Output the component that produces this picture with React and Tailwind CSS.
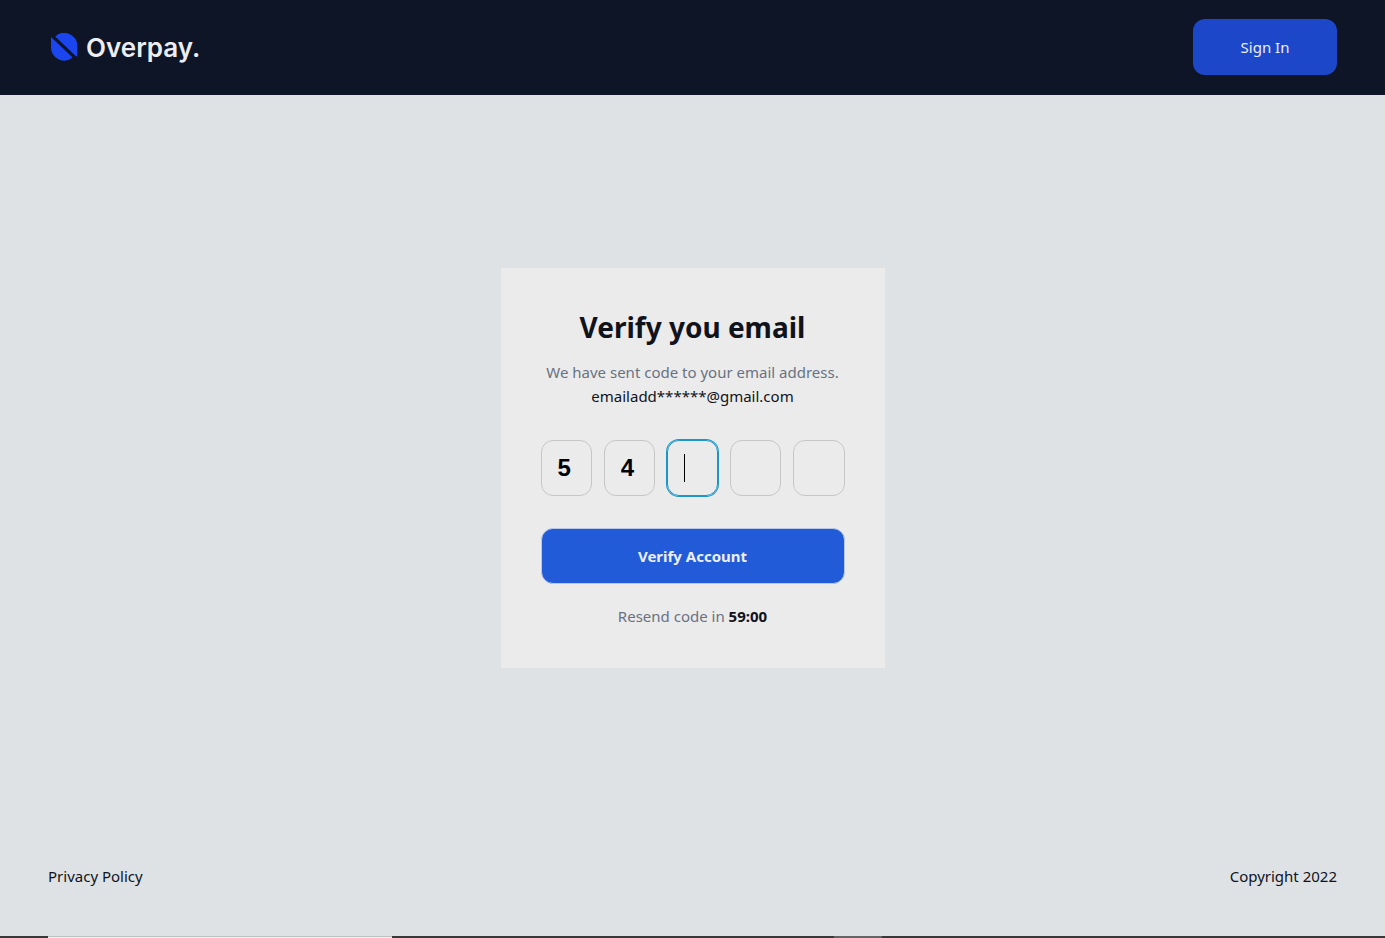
import { useState } from "react";

function Logo() {
  return (
    <a href="#" className="flex items-center gap-2 pt-0.5 pl-0.5 text-[#eceef3]">
      <svg width="28" height="28" viewBox="0 0 28 28" className="mb-0.5" aria-hidden="true">
        <path d="M1 4 L22.6 24.6 A13.2 13.2 0 0 1 1 14 Z" fill="#1b45ee" />
        <path d="M5.2 3.4 A13.2 13.2 0 0 1 27.3 14 V23.4 L26 23.2 Z" fill="#1b45ee" />
      </svg>
      <span className="font-['Inter',sans-serif] text-[26px] leading-8 font-semibold">Overpay.</span>
    </a>
  );
}

function CodeBox({ index, value, onChange, active }) {
  return (
    <div className="relative">
      <input
        type="text"
        inputMode="numeric"
        maxLength={1}
        aria-label={`Digit ${index + 1}`}
        autoFocus={active}
        value={value}
        onChange={(e) => onChange(index, e.target.value)}
        className="block h-14 w-full rounded-xl border border-[#c6c6c6] bg-transparent px-4 font-['Liberation_Sans',Arial,sans-serif] text-2xl font-bold text-black caret-transparent outline-none focus:border-[#1b96cb] focus:ring-1 focus:ring-[#1b96cb]"
      />
      {active && !value && (
        <span className="pointer-events-none absolute top-3.5 left-[17px] h-7 w-px bg-black" />
      )}
    </div>
  );
}

export default function App() {
  const [code, setCode] = useState(["5", "4", "", "", ""]);
  const update = (i, v) => setCode((c) => c.map((d, k) => (k === i ? v : d)));

  return (
    <div className="flex min-h-screen flex-col bg-[#dee2e5] font-['Noto_Sans','Open_Sans',sans-serif] text-base text-[#10131c]">
      <header className="flex items-center justify-between bg-[#0e1526] px-12 pt-[19px] pb-5">
        <Logo />
        <button type="button" className="h-14 w-36 rounded-xl bg-[#1c47c9] text-[15px] text-[#eceef6]">
          Sign In
        </button>
      </header>

      <main className="flex flex-1 items-center justify-center">
        <form
          onSubmit={(e) => e.preventDefault()}
          className="w-96 bg-[#ebebeb] p-10 text-center"
        >
          <h1 className="text-[28px] leading-[38px] font-bold whitespace-nowrap">Verify you email</h1>
          <p className="mt-3.5 text-[15px] leading-6 whitespace-nowrap text-[#687282]">
            We have sent code to your email address.
          </p>
          <p className="text-[15px] leading-6">emailadd******@gmail.com</p>
          <div className="mt-8 grid grid-cols-5 gap-3">
            {code.map((d, i) => (
              <CodeBox key={i} index={i} value={d} onChange={update} active={i === 2} />
            ))}
          </div>
          <button
            type="submit"
            className="mt-8 block h-14 w-full rounded-xl border border-[#b9c8e8] bg-[#225bd8] text-[15px] font-bold text-[#eaeffa]"
          >
            Verify Account
          </button>
          <p className="mt-5 text-[15px] leading-6 text-[#687282]">
            Resend code in <strong className="font-bold text-[#10131c]">59:00</strong>
          </p>
        </form>
      </main>

      <footer className="flex items-center justify-between px-12 pt-[23px] pb-12 text-[15px] leading-6">
        <a href="#">Privacy Policy</a>
        <p>Copyright 2022</p>
      </footer>

      <div className="flex h-0.5 bg-[#38383b]" aria-hidden="true">
        <div className="ml-12 w-[344px] border-t border-[#bdbfc1] bg-[#f1f1f1]" />
        <div className="ml-[442px] w-12 bg-[#646467]" />
      </div>
    </div>
  );
}
